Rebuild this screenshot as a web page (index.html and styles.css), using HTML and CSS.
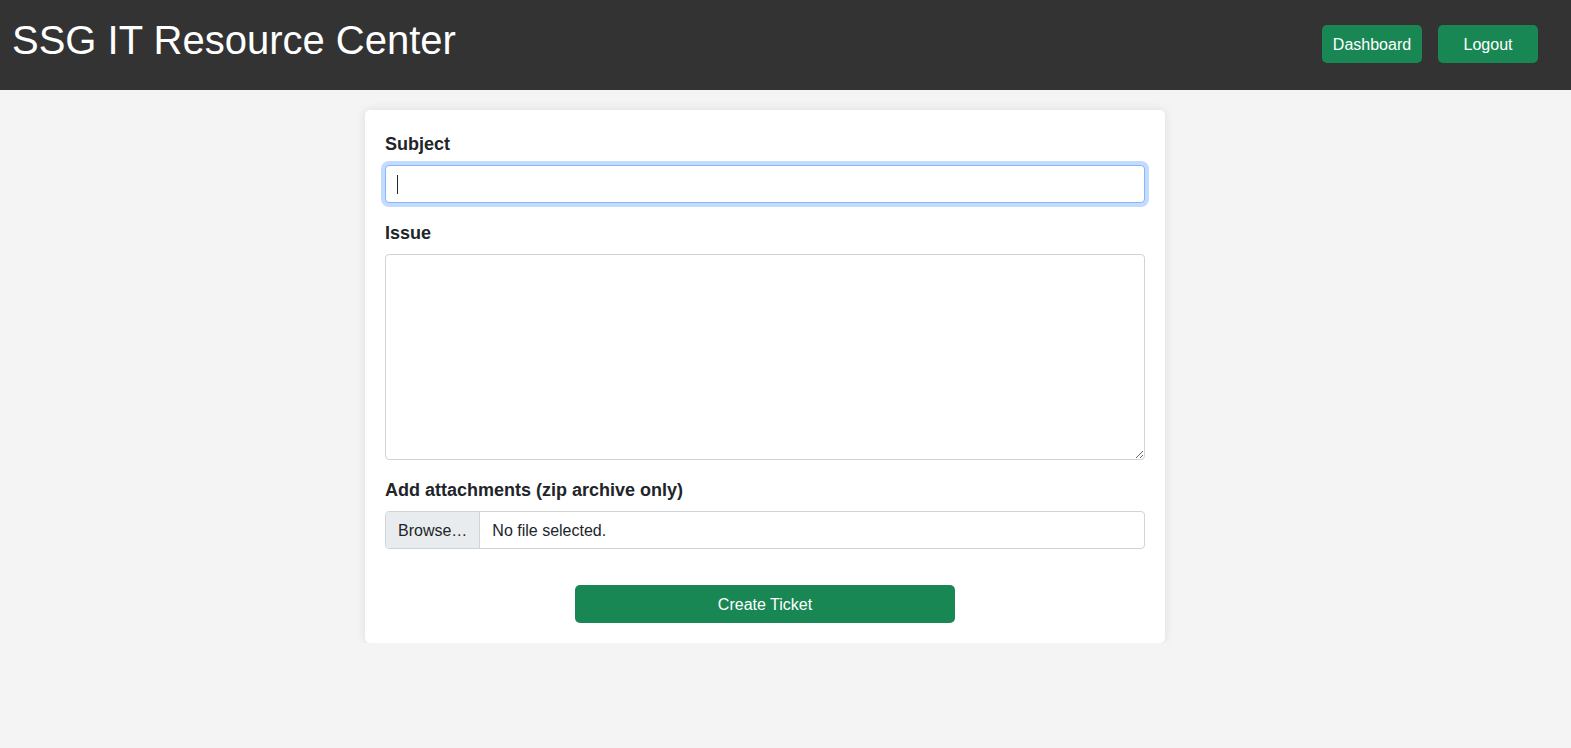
FILE: index.html
```html
<!DOCTYPE html>
<html>
<head>
  <meta charset="UTF-8">
  <title>SSG IT Resource Center</title>
  <link rel="stylesheet" href="styles.css">
</head>
<body>
  <header class="topbar">
    <h1 class="brand">SSG IT Resource Center</h1>
    <nav class="topnav">
      <a class="btn-green nav-btn" href="#">Dashboard</a>
      <a class="btn-green nav-btn" href="#">Logout</a>
    </nav>
  </header>

  <main class="page">
    <form class="ticket-card">
      <div class="field">
        <label class="field-label" for="subject">Subject</label>
        <div class="input-wrap">
          <input class="control is-focused" type="text" id="subject">
          <span class="caret"></span>
        </div>
      </div>
      <div class="field">
        <label class="field-label" for="issue">Issue</label>
        <textarea class="control" id="issue" rows="8"></textarea>
      </div>
      <div class="field">
        <label class="field-label" for="files">Add attachments (zip archive only)</label>
        <label class="control file-control" for="files">
          <span class="file-btn">Browse…</span>
          <span class="file-name">No file selected.</span>
        </label>
        <input class="file-hidden" type="file" id="files" accept=".zip">
      </div>
      <div class="actions">
        <button class="btn-green submit-btn" type="submit">Create Ticket</button>
      </div>
    </form>
  </main>
</body>
</html>
```

FILE: styles.css
```css
* { box-sizing: border-box; }
html, body {
  margin: 0; padding: 0;
  background: #f4f4f4;
  font-family: 'Liberation Sans', Arial, sans-serif;
  color: #212529;
}

.topbar {
  display: flex;
  justify-content: space-between;
  align-items: flex-start;
  height: 90px;
  padding: 16px 33px 0 12px;
  background: #333;
  color: white;
}
.brand {
  margin: 0;
  font-size: 40px;
  font-weight: 400;
  line-height: 48px;
}
.topnav {
  display: flex;
  gap: 16px;
  margin-top: 9px;
}

.btn-green {
  display: inline-block;
  background: #198754;
  color: white;
  border: none;
  border-radius: 5px;
  font-family: inherit;
  font-size: 16px;
  line-height: 24px;
  padding: 8px 0 6px;
  text-align: center;
  text-decoration: none;
  cursor: pointer;
}
.nav-btn { width: 100px; }

.page {
  width: 841px;
  margin: 20px auto 0;
}
.ticket-card {
  width: 800px;
  background: white;
  border-radius: 5px;
  box-shadow: 0 0 10px rgba(0,0,0,0.1);
  padding: 20px;
}

.field { margin-bottom: 16px; }
.field-label {
  display: block;
  font-size: 18px;
  font-weight: 700;
  line-height: 27px;
  padding-top: 1px;
  margin-bottom: 7px;
}
.control {
  display: block;
  width: 100%;
  padding: 7px 12px 5px;
  font-family: inherit;
  font-size: 16px;
  line-height: 24px;
  color: #212529;
  background: white;
  border: 1px solid #ced4da;
  border-radius: 4px;
  outline: none;
}
textarea.control { resize: vertical; height: 206px; }
.control.is-focused, .control:focus {
  border-color: #86b7fe;
  box-shadow: 0 0 0 4px rgba(13,110,253,0.25);
}

.input-wrap { position: relative; }
.caret {
  position: absolute;
  left: 12px;
  top: 10px;
  width: 1px;
  height: 19px;
  background: #212529;
}

.file-control {
  display: flex;
  padding: 0;
  overflow: hidden;
  cursor: pointer;
}
.file-btn {
  padding: 7px 12px 5px;
  background: #e9ecef;
  border-right: 1px solid #ced4da;
}
.file-name { padding: 7px 12px 5px; }
.file-hidden { display: none; }

.actions {
  display: flex;
  justify-content: center;
  padding-top: 20px;
}
.submit-btn { width: 50%; }
```
